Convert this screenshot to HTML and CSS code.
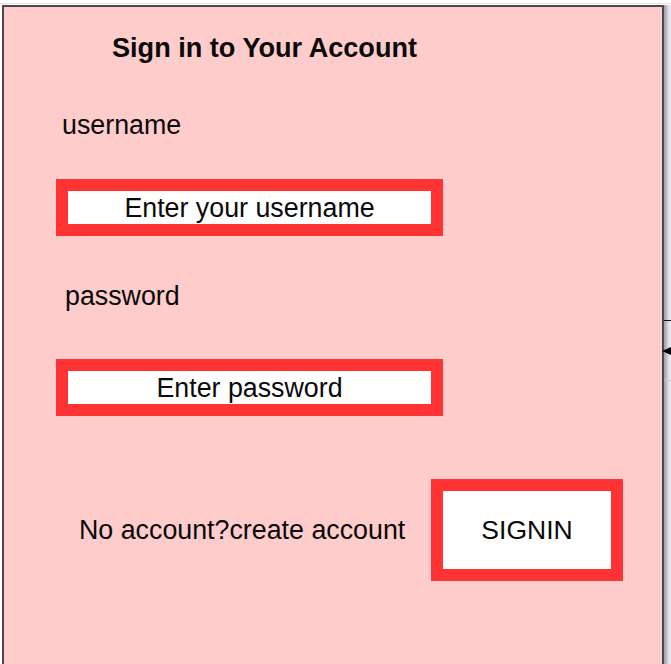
FILE: index.html
```html
<!DOCTYPE html>
<html lang="en">
<head>
<meta charset="utf-8">
<title>Sign in</title>
<link rel="stylesheet" href="styles.css">
</head>
<body>
<div class="canvas">
  <div class="panel">
    <h1 class="title">Sign in to Your Account</h1>
    <div class="label label-user">username</div>
    <div class="field field-user">Enter your username</div>
    <div class="label label-pass">password</div>
    <div class="field field-pass">Enter password</div>
    <div class="row">
      <span class="link">No account?create account</span>
      <div class="btn">SIGNIN</div>
    </div>
  </div>
  <div class="shade"></div>
  <div class="edge-line"></div>
  <div class="edge-grid"></div>
  <div class="edge-arrow"></div>
</div>
</body>
</html>
```
FILE: styles.css
```css
html, body {
  margin: 0;
  padding: 0;
  background: #fff;
  overflow: hidden;
}

body {
  font-family: "Liberation Sans", Arial, sans-serif;
  color: #0a0a0a;
}

.canvas {
  position: relative;
  width: 671px;
  height: 664px;
  box-sizing: border-box;
  padding: 5px 0 0 2px;
  display: flex;
  overflow: hidden;
  background:
    linear-gradient(#e2e2e2, #e2e2e2) 0 3px / 100% 1px no-repeat,
    #fff;
}

.panel {
  flex: none;
  width: 662px;
  height: 659px;
  box-sizing: border-box;
  border: 2px solid #4a4a4a;
  border-bottom: none;
  background: #ffcccc;
  padding-top: 26px;
  display: flex;
  flex-direction: column;
  align-items: flex-start;
}

.shade {
  flex: 1;
  background: linear-gradient(to right, #9b9fa9, #dfe2e9 70%, #eceef2);
}

.title {
  margin: 0 0 0 108px;
  font-size: 27.1px;
  line-height: 30px;
  font-weight: bold;
}

.label {
  font-size: 26.8px;
  line-height: 30px;
}

.label-user {
  margin: 47px 0 0 58px;
}

.label-pass {
  margin: 45px 0 0 61px;
}

.field {
  width: 387px;
  height: 57px;
  box-sizing: border-box;
  border: 12px solid #ff3333;
  background: #fff;
  display: flex;
  align-items: center;
  justify-content: center;
  font-size: 26.8px;
  line-height: 30px;
  margin-left: 52px;
}

.field-user {
  margin-top: 39px;
}

.field-pass {
  margin-top: 48px;
}

.row {
  align-self: stretch;
  margin-top: 63px;
  display: flex;
  align-items: center;
}

.link {
  margin-left: 75px;
  font-size: 26.8px;
  line-height: 30px;
}

.btn {
  margin-left: auto;
  margin-right: 39px;
  width: 192px;
  height: 102px;
  box-sizing: border-box;
  border: 12px solid #ff3333;
  background: #fff;
  display: flex;
  align-items: center;
  justify-content: center;
  font-size: 26.5px;
  line-height: 30px;
}

.edge-line {
  position: absolute;
  left: 664px;
  top: 320px;
  width: 7px;
  height: 1px;
  background: #111;
}

.edge-grid {
  position: absolute;
  left: 664px;
  top: 380px;
  width: 7px;
  height: 1px;
  background: #c4c7ce;
}

.edge-arrow {
  position: absolute;
  left: 662px;
  top: 347px;
  width: 0;
  height: 0;
  border-top: 4px solid transparent;
  border-bottom: 4px solid transparent;
  border-right: 9px solid #000;
}
```
